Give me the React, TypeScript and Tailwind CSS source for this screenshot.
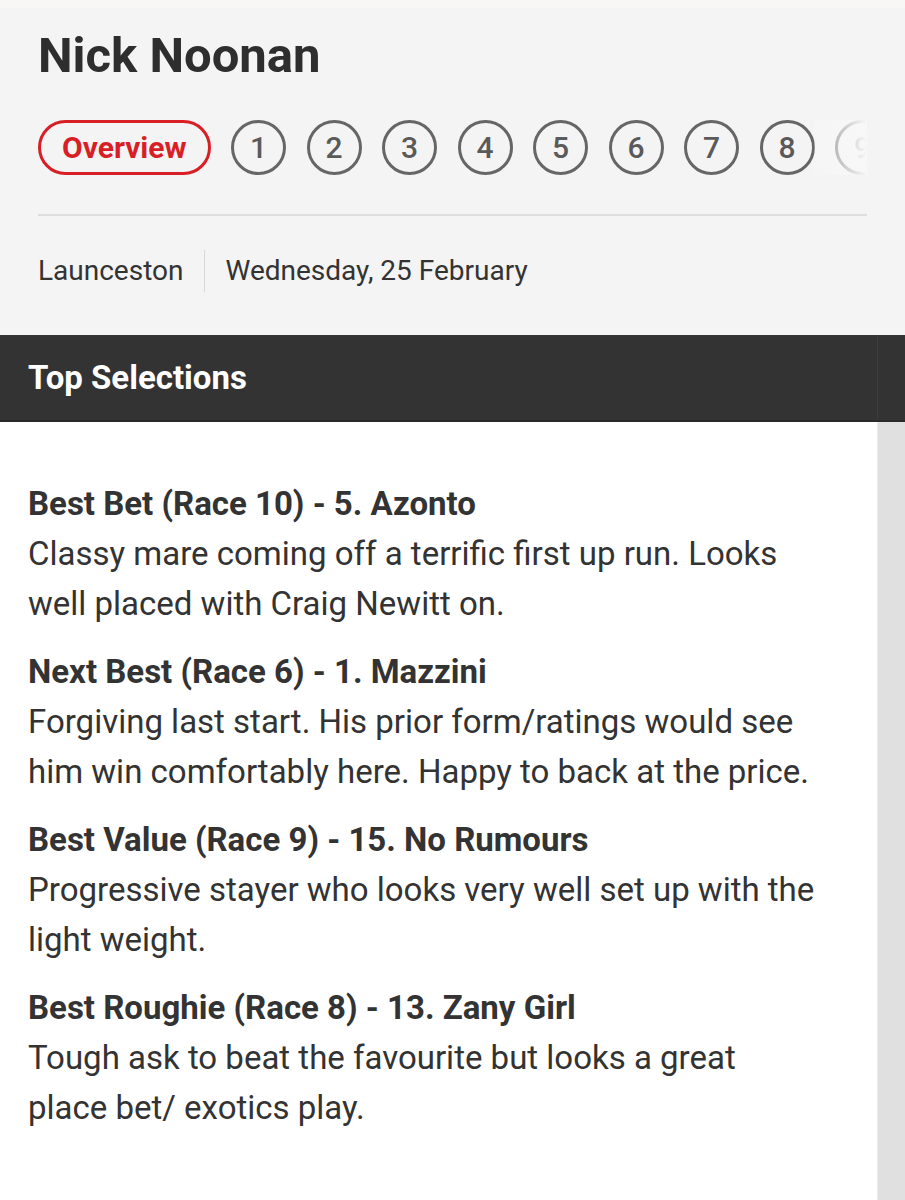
import React from "react";

type Selection = {
  title: string;
  comment: string;
};

const selections: Selection[] = [
  {
    title: "Best Bet (Race 10) - 5. Azonto",
    comment: "Classy mare coming off a terrific first up run. Looks well placed with Craig Newitt on.",
  },
  {
    title: "Next Best (Race 6) - 1. Mazzini",
    comment: "Forgiving last start. His prior form/ratings would see him win comfortably here. Happy to back at the price.",
  },
  {
    title: "Best Value (Race 9) - 15. No Rumours",
    comment: "Progressive stayer who looks very well set up with the light weight.",
  },
  {
    title: "Best Roughie (Race 8) - 13. Zany Girl",
    comment: "Tough ask to beat the favourite but looks a great place bet/ exotics play.",
  },
];

const races = [1, 2, 3, 4, 5, 6, 7, 8, 9];

const RaceTabs: React.FC = () => (
  <div className="relative mt-[36px] overflow-hidden">
    <div className="flex items-center gap-[20.5px] whitespace-nowrap">
      <button className="h-[55px] shrink-0 rounded-full border-[3px] border-[#d91f26] px-[21px] text-[30px] font-bold leading-none text-[#d91f26]">
        Overview
      </button>
      {races.map((n) => (
        <button
          key={n}
          className="flex h-[55px] w-[55px] shrink-0 items-center justify-center rounded-full border-[3px] border-[#666666] text-[30px] font-medium leading-none text-[#5a5a5a]"
        >
          {n}
        </button>
      ))}
    </div>
    {/* fade out the overflowing tabs */}
    <div className="pointer-events-none absolute inset-y-0 right-0 w-[53px] bg-gradient-to-r from-[#f8f8f8]/25 via-[#f8f8f8]/65 to-[#f8f8f8]" />
  </div>
);

const App: React.FC = () => {
  return (
    <div className="flex min-h-[1200px] flex-col bg-white font-['Roboto',sans-serif] text-[#333333]">
      <div className="h-[8px] bg-[#f8f7f6]" />

      {/* Tipster header */}
      <div className="bg-[#f4f4f4] px-[38px] pt-[20px] pb-[43px]">
        <h1 className="text-[49px] font-bold leading-[56px] text-[#2e2e2e]">Nick Noonan</h1>
        <RaceTabs />
        <div className="mt-[39px] border-t-2 border-[#dedede]" />
        <div className="mt-[34px] flex items-center text-[28px] leading-[42px] text-[#333333]">
          <span className="pr-[21px]">Launceston</span>
          <span className="h-[42px] w-px bg-[#d8d8d8]" />
          <span className="pl-[20px]">Wednesday, 25 February</span>
        </div>
      </div>

      {/* Section bar */}
      <div className="flex h-[87px] border-b-2 border-[#2a2a2a] bg-[#333333]">
        <div className="flex flex-1 items-center px-[28px] text-[33px] font-bold text-white">
          Top Selections
        </div>
        <div className="w-[28px] border-l border-[#3d3d3d]" />
      </div>

      <div className="flex flex-1">
        <div className="flex-1 px-[28px] pt-[57px] pb-[40px]">
          <div className="flex max-w-[790px] flex-col gap-[18px]">
            {selections.map((s) => (
              <div key={s.title}>
                <div className="text-[33px] font-bold leading-[50px] text-[#333333]">{s.title}</div>
                <p className="text-[33px] leading-[50px] text-[#333333]">{s.comment}</p>
              </div>
            ))}
          </div>
        </div>
        <div className="w-[28px] shrink-0 border-l border-[#ececec] bg-[#e0e0e0]" />
      </div>
    </div>
  );
};

export default App;
